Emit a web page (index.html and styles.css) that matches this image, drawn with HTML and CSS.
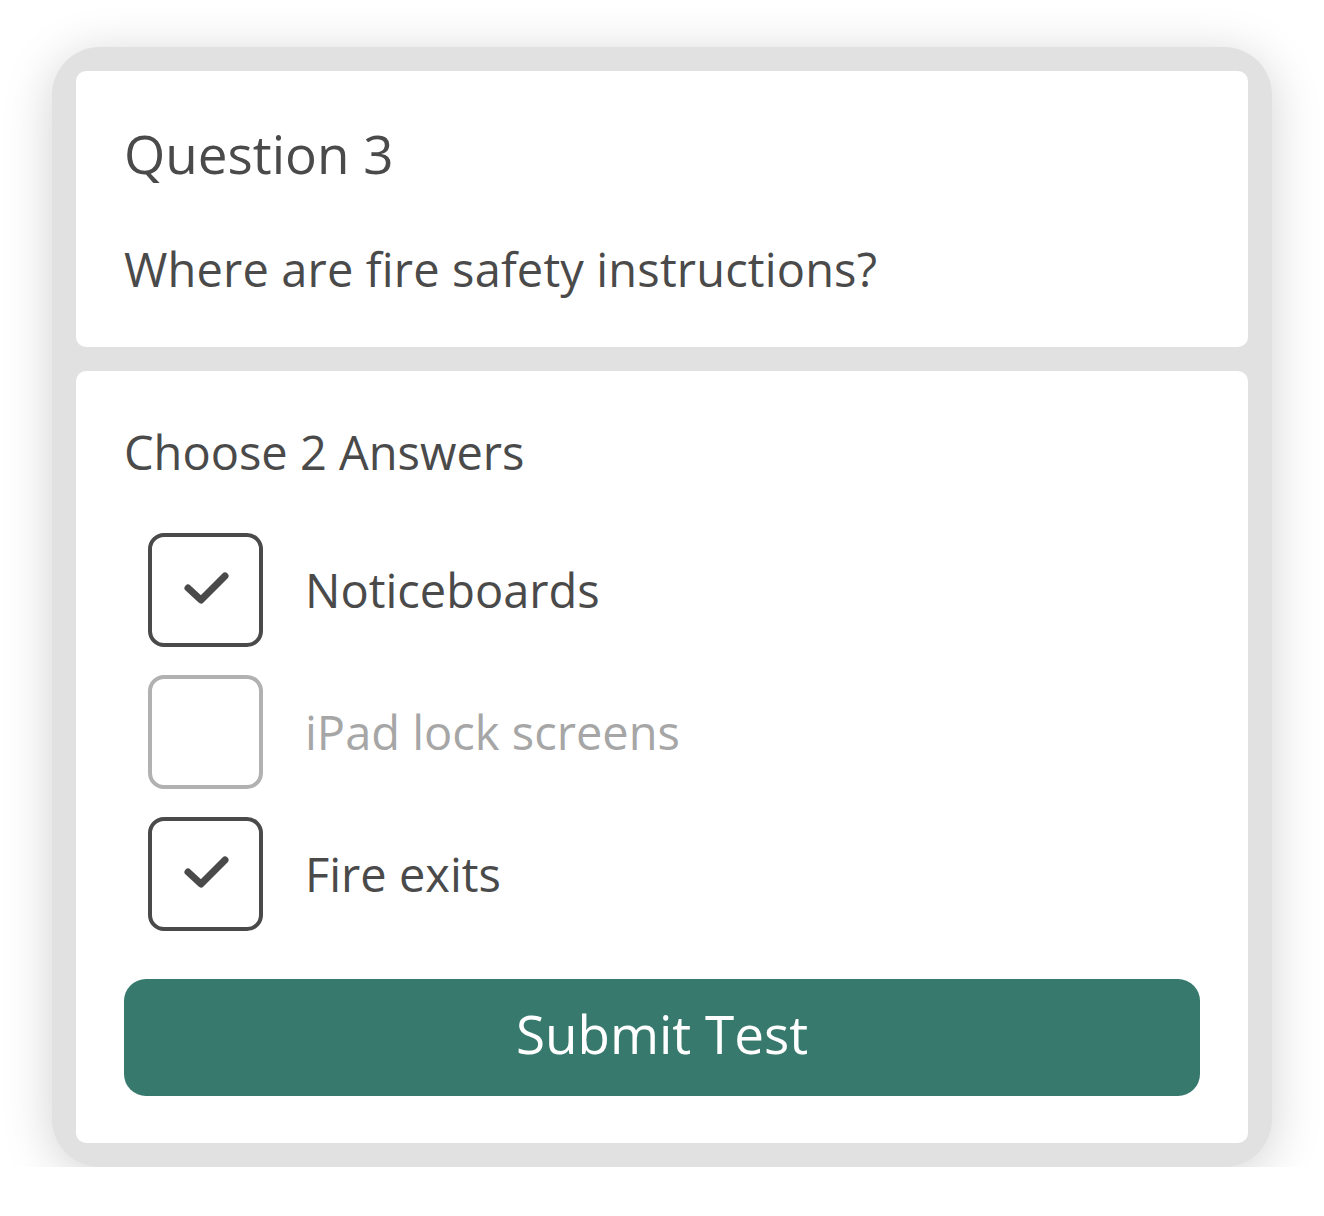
FILE: index.html
```html
<!DOCTYPE html>
<html>
<head>
<meta charset="utf-8">
<link rel="stylesheet" href="styles.css">
</head>
<body>
<div class="frame">
  <section class="card card-question">
    <h1 class="q-title">Question 3</h1>
    <p class="q-text">Where are fire safety instructions?</p>
  </section>
  <section class="card card-answers">
    <h2 class="choose">Choose 2 Answers</h2>
    <ul class="options">
      <li class="option checked">
        <span class="box"><svg viewBox="0 0 114 114" width="114" height="114"><path d="M39 55 L52 67 L76 43" fill="none" stroke="#4a4a4a" stroke-width="7" stroke-linecap="round" stroke-linejoin="round"/></svg></span>
        <span class="label">Noticeboards</span>
      </li>
      <li class="option disabled">
        <span class="box"></span>
        <span class="label">iPad lock screens</span>
      </li>
      <li class="option checked">
        <span class="box"><svg viewBox="0 0 114 114" width="114" height="114"><path d="M39 55 L52 67 L76 43" fill="none" stroke="#4a4a4a" stroke-width="7" stroke-linecap="round" stroke-linejoin="round"/></svg></span>
        <span class="label">Fire exits</span>
      </li>
    </ul>
    <button class="submit">Submit Test</button>
  </section>
</div>
</body>
</html>
```
FILE: styles.css
```css
html, body {
  margin: 0;
  padding: 0;
  background: #ffffff;
}
body {
  font-family: "Open Sans", "Noto Sans", sans-serif;
  color: #4a4a4a;
}
.frame {
  box-sizing: border-box;
  width: 1220px;
  margin: 47px 0 0 52px;
  padding: 24px;
  background: #e1e1e1;
  border-radius: 48px;
  box-shadow: 0 8px 50px rgba(0, 0, 0, 0.18);
  display: flex;
  flex-direction: column;
  gap: 24px;
}
.card {
  background: #ffffff;
  border-radius: 10px;
  padding: 0 48px;
}
.card-question {
  height: 276px;
  box-sizing: border-box;
  padding-top: 53px;
}
.q-title {
  margin: 0;
  font-size: 53px;
  line-height: 60px;
  font-weight: 400;
}
.q-text {
  margin: 57px 0 0;
  font-size: 47px;
  line-height: 56px;
  letter-spacing: 0.15px;
}
.card-answers {
  padding-top: 53px;
  padding-bottom: 47px;
}
.choose {
  margin: 0;
  font-size: 47px;
  line-height: 56px;
  font-weight: 400;
}
.options {
  list-style: none;
  margin: 53px 0 0;
  padding: 0 0 0 24px;
  display: flex;
  flex-direction: column;
  gap: 28px;
}
.option {
  display: flex;
  align-items: center;
  gap: 42px;
}
.box {
  box-sizing: border-box;
  width: 115px;
  height: 114px;
  border: 4px solid #4a4a4a;
  border-radius: 16px;
  display: flex;
  align-items: center;
  justify-content: center;
  flex: none;
}
.box svg {
  display: block;
  flex: none;
}
.label {
  font-size: 47px;
  line-height: 56px;
}
.disabled .box {
  border-color: #b1b1b1;
}
.disabled .label {
  color: #a6a6a6;
}
.submit {
  display: block;
  width: 100%;
  height: 117px;
  margin-top: 48px;
  border: none;
  border-radius: 22px;
  background: #377a6d;
  color: #ffffff;
  font-family: "Open Sans", "Noto Sans", sans-serif;
  font-size: 53px;
  padding: 0 0 8px;
}
```
